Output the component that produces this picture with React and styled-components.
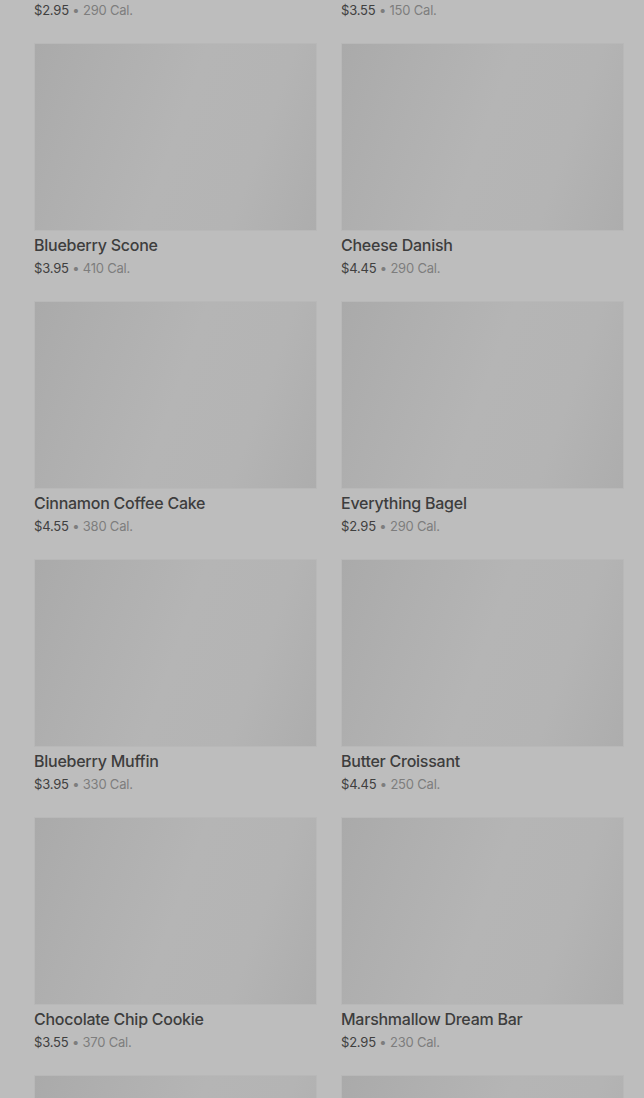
import React from "react";
import styled, { createGlobalStyle } from "styled-components";

const GlobalStyle = createGlobalStyle`
  html, body {
    margin: 0;
    padding: 0;
    background: #bdbdbd;
    overflow: hidden;
  }
  body {
    font-family: Inter, Roboto, "Noto Sans", Arial, sans-serif;
    -webkit-font-smoothing: antialiased;
  }
`;

const items = [
  { name: "Plain Bagel", price: "$2.95", cal: "290 Cal." },
  { name: "Chocolate Croissant", price: "$3.55", cal: "150 Cal." },
  { name: "Blueberry Scone", price: "$3.95", cal: "410 Cal." },
  { name: "Cheese Danish", price: "$4.45", cal: "290 Cal." },
  { name: "Cinnamon Coffee Cake", price: "$4.55", cal: "380 Cal." },
  { name: "Everything Bagel", price: "$2.95", cal: "290 Cal." },
  { name: "Blueberry Muffin", price: "$3.95", cal: "330 Cal." },
  { name: "Butter Croissant", price: "$4.45", cal: "250 Cal." },
  { name: "Chocolate Chip Cookie", price: "$3.55", cal: "370 Cal." },
  { name: "Marshmallow Dream Bar", price: "$2.95", cal: "230 Cal." },
  { name: "Lemon Loaf", price: "$3.45", cal: "470 Cal." },
  { name: "Banana Nut Bread", price: "$3.75", cal: "420 Cal." },
];

const Page = styled.div`
  height: 1098px;
  overflow: hidden;
`;

const Grid = styled.div`
  display: grid;
  grid-template-columns: 283px 283px;
  column-gap: 24px;
  row-gap: 23px;
  padding: 0 20px 0 34px;
  margin-top: -215px;
`;

const Card = styled.div`
  display: flex;
  flex-direction: column;
`;

const Thumb = styled.div`
  height: 188px;
  box-sizing: border-box;
  border: 1px solid #b8b8b8;
  background: linear-gradient(
    110deg,
    #aaaaaa 0%,
    #afafaf 22%,
    #b5b5b5 50%,
    #b4b4b4 75%,
    #adadad 100%
  );
`;

const Title = styled.div`
  margin-top: 3px;
  font-size: 16px;
  font-weight: 500;
  line-height: 22px;
  color: #3d3d3d;
  letter-spacing: -0.25px;
`;

const Meta = styled.div`
  margin-top: 2px;
  font-size: 13px;
  line-height: 20px;
  color: #7d7d7d;
  letter-spacing: -0.2px;
`;

const Price = styled.span`
  color: #404040;
`;

function MenuCard({ item }) {
  return (
    <Card>
      <Thumb />
      <Title>{item.name}</Title>
      <Meta>
        <Price>{item.price}</Price> • {item.cal}
      </Meta>
    </Card>
  );
}

export default function App() {
  return (
    <Page>
      <GlobalStyle />
      <Grid>
        {items.map((item, i) => (
          <MenuCard key={i} item={item} />
        ))}
      </Grid>
    </Page>
  );
}
